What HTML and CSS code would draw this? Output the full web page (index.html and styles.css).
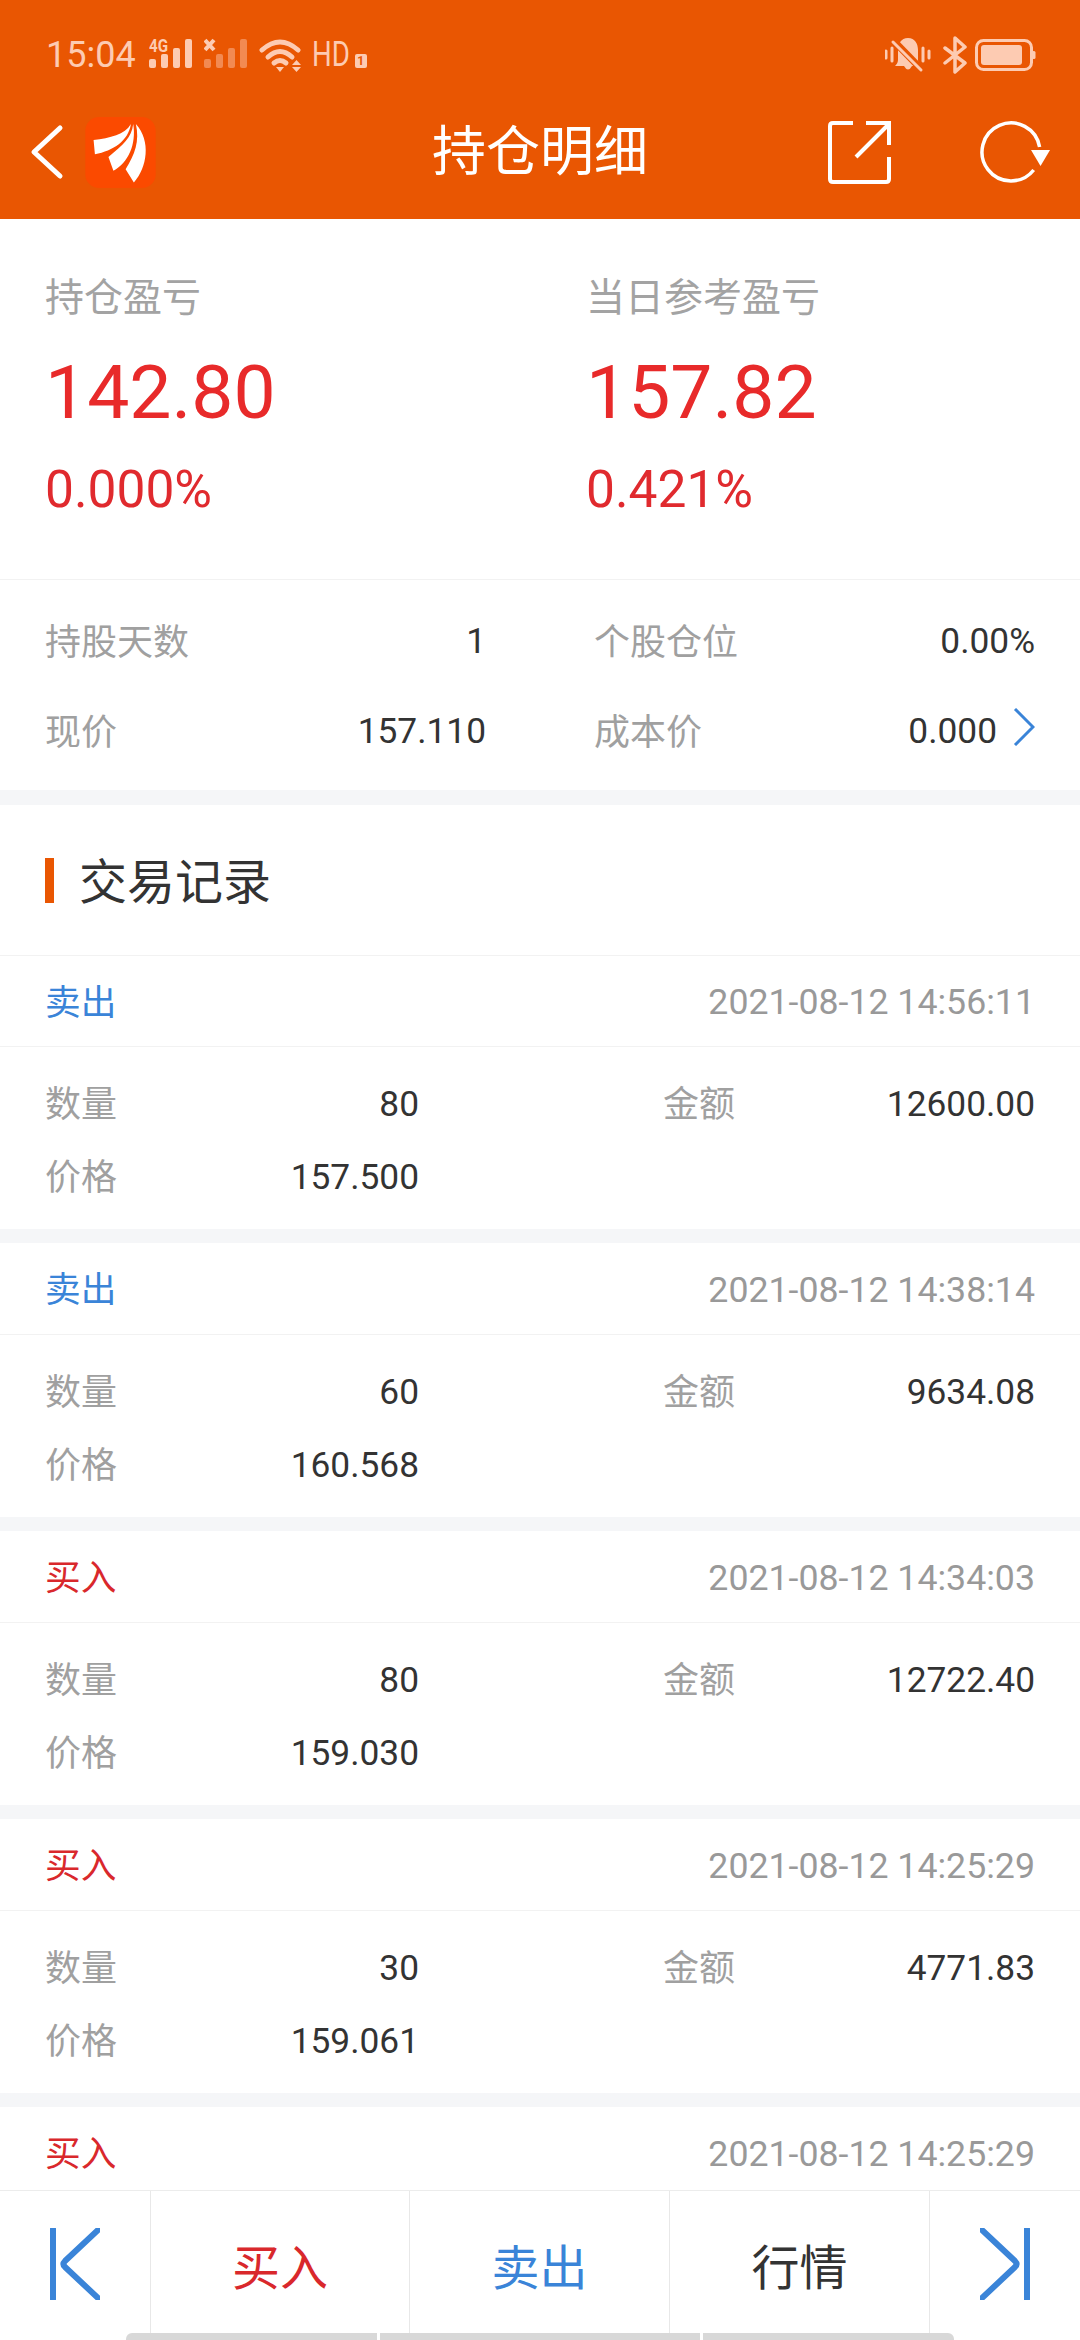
FILE: index.html
```html
<!DOCTYPE html>
<html lang="zh-CN">
<head>
    <meta charset="UTF-8">
    <meta name="viewport" content="width=device-width, initial-scale=1.0">
    <title>持仓明细</title>
    <link rel="stylesheet" href="styles.css">
</head>
<body>

<header class="app-header">
    <div class="status-bar">
        <div class="status-group">
            <span class="status-time">15:04</span>
            <svg class="icon-signal" width="43" height="42" viewBox="0 -3 43 42">
                <text x="0" y="15" class="signal-label" textLength="19" lengthAdjust="spacingAndGlyphs">4G</text>
                <rect x="0" y="22" width="7" height="9" rx="2"/>
                <rect x="12" y="17" width="7" height="14" rx="2"/>
                <rect x="24" y="11" width="7" height="20" rx="2"/>
                <rect x="36" y="2" width="7" height="29" rx="2"/>
            </svg>
            <svg class="icon-signal" width="43" height="42" viewBox="0 -3 43 42">
                <path class="signal-x" d="M1 3 L10 13 M10 3 L1 13"/>
                <rect class="faint" x="0" y="22" width="7" height="9" rx="2"/>
                <rect class="faint" x="12" y="17" width="7" height="14" rx="2"/>
                <rect class="faint" x="24" y="11" width="7" height="20" rx="2"/>
                <rect class="faint" x="36" y="2" width="7" height="29" rx="2"/>
            </svg>
            <svg class="icon-wifi" width="46" height="36" viewBox="0 0 46 36">
                <path class="wifi-arc" d="M4 13 Q22 -3 40 13"/>
                <path class="wifi-arc" d="M10 20 Q22 9 34 20"/>
                <path class="wifi-arc" d="M16 26 Q22 21 28 26"/>
                <polygon points="18,30 26,30 22,35"/>
                <polygon points="34,28 43,28 38.5,23"/>
                <polygon points="34,30 43,30 38.5,35"/>
            </svg>
            <span class="status-hd">HD</span>
            <span class="sim-badge">1</span>
        </div>
        <div class="status-group">
            <svg class="icon-bell" width="46" height="36" viewBox="0 0 46 36">
                <path d="M23 1 C30 1 33 7 33 13 L33 23 C33 26 35 28 36 29 L10 29 C11 28 13 26 13 23 L13 13 C13 7 16 1 23 1 Z"/>
                <path d="M19 29 Q23 36 27 29 Z"/>
                <path class="bell-gap" d="M6 1 L38 34"/>
                <path class="bell-line" d="M8 5 L36 33"/>
                <path class="bell-line" d="M1 14 V21 M7 11 V24 M38 11 V24 M44 14 V21"/>
            </svg>
            <svg class="icon-bt" width="24" height="38" viewBox="0 0 24 38">
                <path d="M2 12 L22 27 L12 36 V2 L22 11 L2 27"/>
            </svg>
            <svg class="icon-battery" width="61" height="32" viewBox="0 0 61 32">
                <rect class="battery-case" x="1.5" y="1.5" width="55" height="29" rx="7"/>
                <rect x="6" y="6" width="41" height="20" rx="3"/>
                <rect x="57" y="12" width="3.5" height="8" rx="1.5"/>
            </svg>
        </div>
    </div>

    <nav class="nav-bar">
        <div class="nav-left">
            <svg class="icon-back" width="34" height="56" viewBox="0 0 34 56">
                <path d="M30 4 L4 28 L30 52"/>
            </svg>
            <svg class="app-logo" width="71" height="71" viewBox="75 47 213 215">
                <rect x="75" y="47" width="213" height="215" rx="42" fill="#fb4a00"/>
                <path d="M213 68 C195 100 150 110 100 117 L104 160 C160 148 205 120 213 68 Z" fill="#fff"/>
                <path d="M220 68 C215 110 190 130 145 168 L160 210 C205 185 230 130 220 68 Z" fill="#fff"/>
                <path d="M228 68 C240 120 225 160 197 205 L222 245 C262 200 275 120 228 68 Z" fill="#fff"/>
            </svg>
        </div>
        <h1 class="nav-title">持仓明细</h1>
        <div class="nav-right">
            <svg class="icon-share" width="63" height="63" viewBox="0 0 63 63">
                <path d="M25 2 H5 Q2 2 2 5 V58 Q2 61 5 61 H58 Q61 61 61 58 V36"/>
                <path d="M28 36 L60 4"/>
                <path d="M38 2 H61 V24"/>
            </svg>
            <svg class="icon-refresh" width="70" height="64" viewBox="0 0 70 64">
                <path d="M59.6 27 A29 29 0 1 0 53.7 50"/>
                <polygon points="51,30 70,30 60.5,46"/>
            </svg>
        </div>
    </nav>
</header>

<main class="content">
    <section class="summary">
        <div class="summary-col">
            <div class="summary-label">持仓盈亏</div>
            <div class="summary-value">142.80</div>
            <div class="summary-rate">0.000%</div>
        </div>
        <div class="summary-col">
            <div class="summary-label">当日参考盈亏</div>
            <div class="summary-value">157.82</div>
            <div class="summary-rate">0.421%</div>
        </div>
    </section>

    <section class="position">
        <div class="info-row"><span class="info-label">持股天数</span><span class="info-value">1</span></div>
        <div class="info-row"><span class="info-label">个股仓位</span><span class="info-value">0.00%</span></div>
        <div class="info-row"><span class="info-label">现价</span><span class="info-value">157.110</span></div>
        <div class="info-row">
            <span class="info-label">成本价</span>
            <span class="info-value info-link">
                0.000
                <svg class="icon-more" width="22" height="38" viewBox="0 0 22 38">
                    <path d="M2 1 L20 19 L2 37"/>
                </svg>
            </span>
        </div>
    </section>

    <h2 class="section-title"><span class="title-mark"></span><span class="title-text">交易记录</span></h2>

    <section class="records">
        <article class="record">
            <div class="record-head"><span class="sell">卖出</span><span class="record-time">2021-08-12 14:56:11</span></div>
            <div class="record-body">
                <div class="info-row"><span class="info-label">数量</span><span class="info-value">80</span></div>
                <div class="info-row"><span class="info-label">金额</span><span class="info-value">12600.00</span></div>
                <div class="info-row"><span class="info-label">价格</span><span class="info-value">157.500</span></div>
            </div>
        </article>
        <article class="record">
            <div class="record-head"><span class="sell">卖出</span><span class="record-time">2021-08-12 14:38:14</span></div>
            <div class="record-body">
                <div class="info-row"><span class="info-label">数量</span><span class="info-value">60</span></div>
                <div class="info-row"><span class="info-label">金额</span><span class="info-value">9634.08</span></div>
                <div class="info-row"><span class="info-label">价格</span><span class="info-value">160.568</span></div>
            </div>
        </article>
        <article class="record">
            <div class="record-head"><span class="buy">买入</span><span class="record-time">2021-08-12 14:34:03</span></div>
            <div class="record-body">
                <div class="info-row"><span class="info-label">数量</span><span class="info-value">80</span></div>
                <div class="info-row"><span class="info-label">金额</span><span class="info-value">12722.40</span></div>
                <div class="info-row"><span class="info-label">价格</span><span class="info-value">159.030</span></div>
            </div>
        </article>
        <article class="record">
            <div class="record-head"><span class="buy">买入</span><span class="record-time">2021-08-12 14:25:29</span></div>
            <div class="record-body">
                <div class="info-row"><span class="info-label">数量</span><span class="info-value">30</span></div>
                <div class="info-row"><span class="info-label">金额</span><span class="info-value">4771.83</span></div>
                <div class="info-row"><span class="info-label">价格</span><span class="info-value">159.061</span></div>
            </div>
        </article>
        <article class="record">
            <div class="record-head"><span class="buy">买入</span><span class="record-time">2021-08-12 14:25:29</span></div>
        </article>
    </section>
</main>

<footer class="toolbar">
    <div class="tool-item">
        <svg class="icon-skip" width="50" height="72" viewBox="0 0 50 72">
            <path d="M3 1 V71"/>
            <path d="M48 2 L15 33 Q12 36 15 39 L48 70"/>
        </svg>
    </div>
    <div class="tool-item buy">买入</div>
    <div class="tool-item sell">卖出</div>
    <div class="tool-item">行情</div>
    <div class="tool-item">
        <svg class="icon-skip" width="50" height="72" viewBox="0 0 50 72">
            <path d="M47 1 V71"/>
            <path d="M2 2 L35 33 Q38 36 35 39 L2 70"/>
        </svg>
    </div>
    <div class="scroll-thumb">
        <span></span>
        <span></span>
        <span></span>
    </div>
</footer>

</body>
</html>
```

FILE: styles.css
```css
/* Reset */
* {
    margin: 0;
    padding: 0;
    box-sizing: border-box;
}

html,
body {
    width: 1080px;
    height: 2340px;
    overflow: hidden;
}

body {
    display: flex;
    flex-direction: column;
    background: #fff;
    color: #333;
    font-family: Roboto, "Noto Sans CJK SC", sans-serif;
}

/* Header */
.app-header {
    height: 219px;
    background: #e95602;
    flex-shrink: 0;
}

.status-bar {
    height: 108px;
    padding: 2px 44px 0 46px;
    display: flex;
    align-items: center;
    justify-content: space-between;
}

.status-group {
    display: flex;
    align-items: center;
}

.status-time {
    font-size: 36px;
    line-height: 40px;
    color: #fdcbb2;
    margin-right: 13px;
}

.icon-signal {
    margin-right: 12px;
    fill: #fdcbb2;
}

.icon-signal + .icon-signal {
    margin-right: 11px;
}

.icon-signal .faint {
    fill: #f28a52;
}

.signal-label {
    font-family: Roboto, sans-serif;
    font-size: 18px;
    font-weight: 700;
}

.signal-x {
    fill: none;
    stroke: #fdcbb2;
    stroke-width: 4;
}

.icon-wifi {
    margin-right: 8px;
    fill: #fdcbb2;
}

.wifi-arc {
    fill: none;
    stroke: #fdcbb2;
    stroke-width: 5;
    stroke-linecap: round;
}

/* the phone's HD mark is narrower than Roboto, so squeeze it */
.status-hd {
    margin-right: -5px;
    font-size: 35px;
    line-height: 40px;
    color: #fdcbb2;
    transform: scaleX(0.79);
    transform-origin: left center;
}

.sim-badge {
    width: 12px;
    height: 14px;
    margin-top: 11px;
    border-radius: 2px;
    background: #fdcbb2;
    color: #e95602;
    font-size: 12px;
    font-weight: 700;
    line-height: 14px;
    text-align: center;
}

.icon-bell {
    margin-right: 12px;
    fill: #fdcbb2;
}

.bell-gap {
    fill: none;
    stroke: #e95602;
    stroke-width: 7;
}

.bell-line {
    fill: none;
    stroke: #fdcbb2;
    stroke-width: 3;
    stroke-linecap: round;
}

.icon-bt {
    margin-right: 8px;
    fill: none;
    stroke: #fdcbb2;
    stroke-width: 3.5;
    stroke-linejoin: round;
    stroke-linecap: round;
}

.icon-battery {
    fill: #fdcbb2;
}

.battery-case {
    fill: none;
    stroke: #fdcbb2;
    stroke-width: 3;
}

.nav-bar {
    height: 88px;
    padding: 0 30px;
    display: grid;
    grid-template-columns: 1fr auto 1fr;
    align-items: center;
}

.nav-left,
.nav-right {
    display: flex;
    align-items: center;
}

.nav-left {
    gap: 21px;
}

.nav-right {
    gap: 89px;
    justify-content: flex-end;
}

.nav-title {
    padding-top: 2px;
    color: #fff;
    font-size: 54px;
    font-weight: 400;
    line-height: 70px;
}

.icon-back {
    fill: none;
    stroke: #fff;
    stroke-width: 5;
    stroke-linecap: round;
    stroke-linejoin: round;
}

.icon-share {
    fill: none;
    stroke: #fff;
    stroke-width: 4;
}

.icon-refresh {
    fill: none;
    stroke: #fff;
    stroke-width: 3.5;
}

.icon-refresh polygon {
    fill: #fff;
    stroke: none;
}

/* Scrolling area */
.content {
    flex: 1;
    min-height: 0;
    overflow: hidden;
}

.summary {
    padding: 54px 0 59px 45px;
    display: grid;
    grid-template-columns: 541px 1fr;
    border-bottom: 1px solid #f2f2f2;
}

.summary-label {
    font-size: 39px;
    line-height: 50px;
    color: #a3a3a3;
}

.summary-value {
    margin-top: 24px;
    font-size: 75px;
    line-height: 90px;
    color: #e82a2a;
}

.summary-rate {
    margin-top: 23px;
    font-size: 51.5px;
    line-height: 60px;
    color: #e02a2e;
}

.position {
    padding: 16px 45px 14px 45px;
    display: grid;
    grid-template-columns: 441px 441px;
    column-gap: 108px;
    grid-auto-rows: 90px;
    border-bottom: 15px solid #f5f6f8;
}

.info-row {
    display: flex;
    align-items: center;
    justify-content: space-between;
}

.info-label {
    padding-bottom: 5px;
    font-size: 36px;
    color: #a0a0a0;
}

.info-value {
    font-size: 35.3px;
    color: #333;
}

.info-link {
    display: flex;
    align-items: center;
    gap: 16px;
}

.icon-more {
    margin-top: -8px;
    fill: none;
    stroke: #3a84d8;
    stroke-width: 3;
}

/* Trade list */
.section-title {
    height: 150px;
    padding-left: 45px;
    display: flex;
    align-items: center;
    font-size: 48px;
    font-weight: 400;
    color: #333;
}

.title-mark {
    width: 9px;
    height: 45px;
    margin-right: 25px;
    background: #e95602;
}

.title-text {
    padding-bottom: 4px;
}

.record {
    border-bottom: 14px solid #f5f6f8;
}

.record:first-child .record-head {
    border-top: 1px solid #f2f2f2;
}

.record-head {
    height: 92px;
    padding: 0 45px;
    display: flex;
    align-items: center;
    justify-content: space-between;
    font-size: 35.7px;
    border-bottom: 1px solid #f2f2f2;
}

.record-head .buy,
.record-head .sell {
    padding-bottom: 4px;
}

.record-time {
    padding-top: 2px;
    color: #999;
}

.record-body {
    height: 182px;
    padding: 20px 45px 0 45px;
    display: grid;
    grid-template-columns: 374px 372px;
    justify-content: space-between;
    grid-auto-rows: 73px;
}

.buy {
    color: #d9282c;
}

.sell {
    color: #3a84d8;
}

/* Bottom toolbar */
.toolbar {
    position: relative;
    height: 150px;
    flex-shrink: 0;
    display: grid;
    grid-template-columns: 150px 259px 260px 260px 151px;
    background: #fff;
    border-top: 1px solid #ececec;
}

.tool-item {
    padding-bottom: 3px;
    display: flex;
    align-items: center;
    justify-content: center;
    font-size: 48px;
    border-left: 1px solid #e8e8e8;
}

.tool-item:first-child {
    border-left: none;
}

.icon-skip {
    fill: none;
    stroke: #3a84d8;
    stroke-width: 6;
    stroke-linecap: round;
    stroke-linejoin: round;
}

/* Horizontal scroll indicator over the toolbar */
.scroll-thumb {
    position: absolute;
    left: 126px;
    bottom: 0;
    width: 828px;
    height: 7px;
    display: flex;
    gap: 3px;
}

.scroll-thumb span {
    flex: 1 1 251px;
    background: #d8d8d8;
}

.scroll-thumb span:nth-child(2) {
    flex-basis: 320px;
}

.scroll-thumb span:first-child {
    border-radius: 6px 0 0 0;
}

.scroll-thumb span:last-child {
    border-radius: 0 6px 0 0;
}
```
